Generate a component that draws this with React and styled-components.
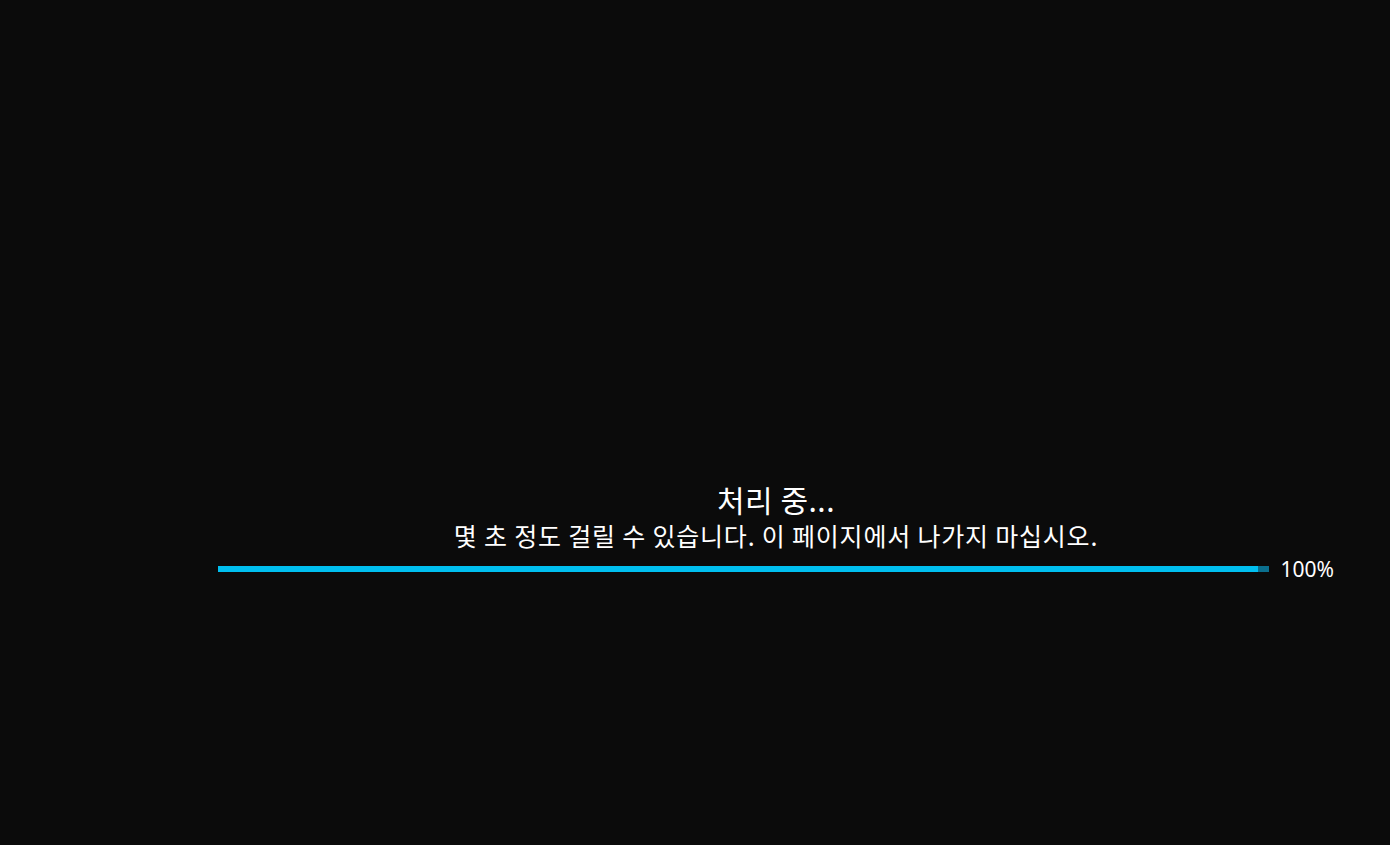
import React from 'react';
import styled, { createGlobalStyle } from 'styled-components';

const GlobalStyle = createGlobalStyle`
  html, body {
    margin: 0;
    padding: 0;
    background: #0b0b0b;
  }
  body {
    font-family: "Noto Sans CJK KR", "Noto Sans", sans-serif;
    color: #ffffff;
  }
`;

const Layout = styled.div`
  display: flex;
  width: 100%;
  height: 100vh;
  background: #0b0b0b;
`;

// left rail is empty and blends into the background
const SideRail = styled.aside`
  width: 162px;
  flex-shrink: 0;
`;

const Main = styled.main`
  flex: 1;
  display: flex;
  flex-direction: column;
  align-items: center;
  padding: 479px 56px 0;
  box-sizing: border-box;
`;

const Title = styled.h1`
  margin: 0;
  font-size: 30px;
  font-weight: 400;
  letter-spacing: 0.5px;
  line-height: 40px;
  color: #ffffff;
`;

const Subtitle = styled.p`
  margin: 0;
  font-size: 25px;
  font-weight: 400;
  letter-spacing: 0.8px;
  line-height: 32px;
  color: #ffffff;
`;

const ProgressRow = styled.div`
  align-self: stretch;
  display: flex;
  align-items: center;
  gap: 12px;
  margin-top: 6px;
`;

const Track = styled.div`
  flex: 1;
  height: 6px;
  background: #0b6f8e;
`;

const Fill = styled.div`
  height: 100%;
  background: #00bff0;
`;

const Percent = styled.span`
  font-family: "Noto Sans", sans-serif;
  font-size: 21px;
  line-height: 24px;
  color: #ffffff;
`;

export default function App() {
  const progress = 99;
  return (
    <>
      <GlobalStyle />
      <Layout>
        <SideRail />
        <Main>
          <Title>처리 중...</Title>
          <Subtitle>몇 초 정도 걸릴 수 있습니다. 이 페이지에서 나가지 마십시오.</Subtitle>
          <ProgressRow>
            <Track>
              <Fill style={{ width: `${progress}%` }} />
            </Track>
            <Percent>100%</Percent>
          </ProgressRow>
        </Main>
      </Layout>
    </>
  );
}
